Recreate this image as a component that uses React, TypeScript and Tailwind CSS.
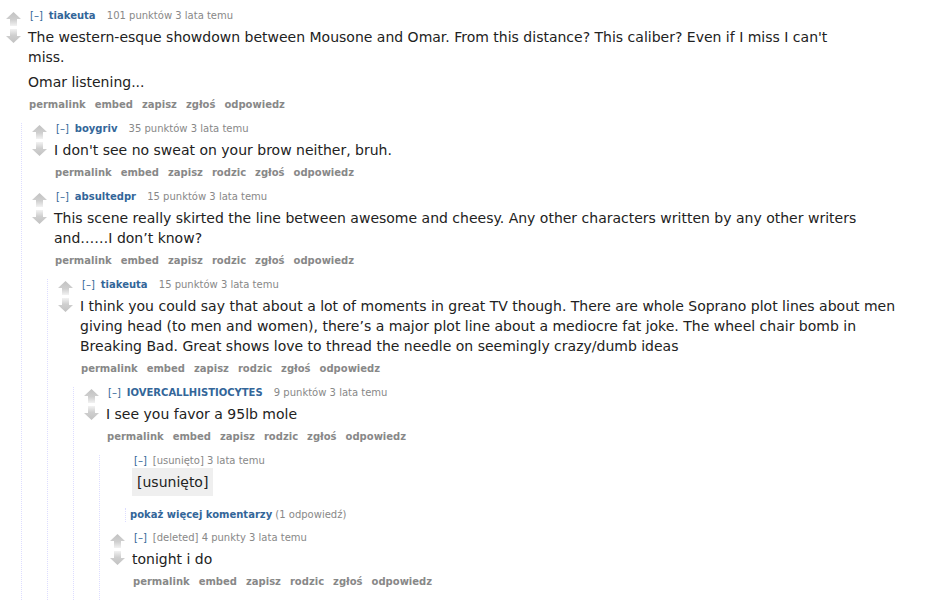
import React from "react"

type Comment = {
  author: string
  deletedAuthor?: boolean
  score?: string
  time: string
  body?: React.ReactNode[]
  removed?: boolean
  noArrows?: boolean
  buttons?: string[]
  children?: Comment[]
  more?: boolean
}

const BTN = ["permalink", "embed", "zapisz", "rodzic", "zgłoś", "odpowiedz"]

const DATA: Comment = {
  author: "tiakeuta",
  score: "101 punktów",
  time: "3 lata temu",
  body: [
    <>The western-esque showdown between Mousone and Omar. From this distance? This caliber? Even if I miss I can't<br />miss.</>,
    <>Omar listening...</>,
  ],
  buttons: ["permalink", "embed", "zapisz", "zgłoś", "odpowiedz"],
  children: [
    {
      author: "boygriv",
      score: "35 punktów",
      time: "3 lata temu",
      body: [<>I don't see no sweat on your brow neither, bruh.</>],
      buttons: BTN,
    },
    {
      author: "absultedpr",
      score: "15 punktów",
      time: "3 lata temu",
      body: [<>This scene really skirted the line between awesome and cheesy. Any other characters written by any other writers<br />and……I don’t know?</>],
      buttons: BTN,
      children: [
        {
          author: "tiakeuta",
          score: "15 punktów",
          time: "3 lata temu",
          body: [
            <>I think you could say that about a lot of moments in great TV though. There are whole Soprano plot lines about men<br />giving head (to men and women), there’s a major plot line about a mediocre fat joke. The wheel chair bomb in<br />Breaking Bad. Great shows love to thread the needle on seemingly crazy/dumb ideas</>,
          ],
          buttons: BTN,
          children: [
            {
              author: "IOVERCALLHISTIOCYTES",
              score: "9 punktów",
              time: "3 lata temu",
              body: [<>I see you favor a 95lb mole</>],
              buttons: BTN,
              children: [
                {
                  author: "[usunięto]",
                  deletedAuthor: true,
                  time: "3 lata temu",
                  removed: true,
                  noArrows: true,
                  more: true,
                },
                {
                  author: "[deleted]",
                  deletedAuthor: true,
                  score: "4 punkty",
                  time: "3 lata temu",
                  body: [<>tonight i do</>],
                  buttons: BTN,
                },
              ],
            },
          ],
        },
      ],
    },
  ],
}

function Arrow({ down }: { down?: boolean }) {
  const id = down ? "gd" : "gu"
  return (
    <svg width="15" height="14" viewBox="0 0 15 14" className="block">
      <defs>
        <linearGradient id={id} x1="0" y1={down ? "1" : "0"} x2="0" y2={down ? "0" : "1"}>
          <stop offset="0" stopColor="#c2c2c2" />
          <stop offset="0.55" stopColor="#cfcfcf" />
          <stop offset="1" stopColor="#f2f2f2" />
        </linearGradient>
      </defs>
      {down ? (
        <path d="M4 0H11V7H15L7.5 14L0 7H4Z" fill={`url(#${id})`} />
      ) : (
        <path d="M7.5 0L15 7H11V14H4V7H0Z" fill={`url(#${id})`} />
      )}
    </svg>
  )
}

function Thing({ c }: { c: Comment }) {
  return (
    <div>
      <div className="flex">
        <div className={`w-[15px] shrink-0 pt-[2px] flex flex-col gap-[3px] ${c.noArrows ? "invisible" : ""}`}>
          <Arrow />
          <Arrow down />
        </div>
        <div className="ml-[7px] min-w-0">
          <p className="pl-[2px] text-[10px] leading-[12px] text-[#888] whitespace-nowrap">
            <span className="text-[#369] mr-[6px]">[–]</span>
            {c.deletedAuthor ? (
              <span className="text-[#888]">{c.author}</span>
            ) : (
              <span className="text-[#369] font-bold mr-[8px]">{c.author}</span>
            )}
            {c.score ? ` ${c.score}` : ""} {c.time}
          </p>
          {c.removed ? (
            <div className="mt-[1px] mb-[12px] inline-block bg-[#efefef] px-[5px] py-[4px] text-[14px] leading-[20px] text-[#222]">
              [usunięto]
            </div>
          ) : (
            <div className="my-[5px] text-[14px] leading-[20px] text-[#222] max-w-[840px] whitespace-nowrap">
              {c.body?.map((p, i) => (
                <p key={i} className={i > 0 ? "mt-[5px]" : ""}>
                  {p}
                </p>
              ))}
            </div>
          )}
          {c.buttons && (
            <ul className="flex gap-[9px] pl-[1px] text-[10px] leading-[16px] font-bold text-[#888] mb-[10px]">
              {c.buttons.map((b) => (
                <li key={b}>{b}</li>
              ))}
            </ul>
          )}
        </div>
      </div>
      {c.children && (
        <div className="ml-[15px] border-l border-dotted border-[#ddf] pl-[10px]">
          {c.children.map((ch, i) => (
            <Thing key={i} c={ch} />
          ))}
        </div>
      )}
      {c.more && (
        <div className="ml-[15px] mb-[10px] border-l border-dotted border-[#ddf] pl-[4px] text-[10px] leading-[14px] whitespace-nowrap">
          <span className="font-bold text-[#369]">pokaż więcej komentarzy</span>{" "}
          <span className="text-[#888]">(1 odpowiedź)</span>
        </div>
      )}
    </div>
  )
}

export default function App() {
  return (
    <div className="min-h-[601px] w-[927px] overflow-hidden bg-white pt-[10px] pl-[6px] font-['DejaVu_Sans',Verdana,sans-serif]">
      <Thing c={DATA} />
    </div>
  )
}
